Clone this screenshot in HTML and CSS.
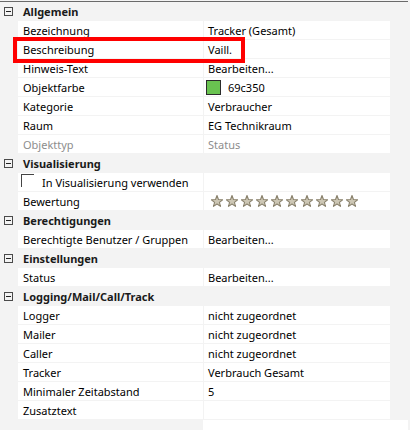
FILE: index.html
```html
<!DOCTYPE html>
<html lang="de">
<head>
<meta charset="utf-8">
<title>Eigenschaften</title>
<link rel="stylesheet" href="styles.css">
</head>
<body>
<div class="panel">
  <div class="cat"><svg class="toggle" width="9" height="9" viewBox="0 0 9 9"><rect x="0.5" y="0.5" width="8" height="8" fill="none" stroke="#4a4a4a"/><path d="M2 4.5H7" stroke="#222"/></svg><span>Allgemein</span></div>
  <div class="prop"><span class="name">Bezeichnung</span><span class="val">Tracker (Gesamt)</span></div>
  <div class="prop"><span class="name">Beschreibung</span><span class="val">Vaill.</span></div>
  <div class="prop"><span class="name">Hinweis-Text</span><span class="val">Bearbeiten...</span></div>
  <div class="prop"><span class="name">Objektfarbe</span><span class="val"><span class="swatch"></span>69c350</span></div>
  <div class="prop"><span class="name">Kategorie</span><span class="val">Verbraucher</span></div>
  <div class="prop"><span class="name">Raum</span><span class="val">EG Technikraum</span></div>
  <div class="prop disabled"><span class="name">Objekttyp</span><span class="val">Status</span></div>
  <div class="cat"><svg class="toggle" width="9" height="9" viewBox="0 0 9 9"><rect x="0.5" y="0.5" width="8" height="8" fill="none" stroke="#4a4a4a"/><path d="M2 4.5H7" stroke="#222"/></svg><span>Visualisierung</span></div>
  <div class="prop"><span class="name check"><span class="box"></span>In Visualisierung verwenden</span><span class="val"></span></div>
  <div class="prop"><span class="name">Bewertung</span><span class="val stars">
    <svg width="12" height="12" viewBox="0 0 11 11"><polygon points="5.5,0.5 6.85,4.14 10.73,4.3 7.69,6.71 8.73,10.45 5.5,8.3 2.27,10.45 3.31,6.71 0.27,4.3 4.15,4.14"/></svg>
    <svg width="12" height="12" viewBox="0 0 11 11"><polygon points="5.5,0.5 6.85,4.14 10.73,4.3 7.69,6.71 8.73,10.45 5.5,8.3 2.27,10.45 3.31,6.71 0.27,4.3 4.15,4.14"/></svg>
    <svg width="12" height="12" viewBox="0 0 11 11"><polygon points="5.5,0.5 6.85,4.14 10.73,4.3 7.69,6.71 8.73,10.45 5.5,8.3 2.27,10.45 3.31,6.71 0.27,4.3 4.15,4.14"/></svg>
    <svg width="12" height="12" viewBox="0 0 11 11"><polygon points="5.5,0.5 6.85,4.14 10.73,4.3 7.69,6.71 8.73,10.45 5.5,8.3 2.27,10.45 3.31,6.71 0.27,4.3 4.15,4.14"/></svg>
    <svg width="12" height="12" viewBox="0 0 11 11"><polygon points="5.5,0.5 6.85,4.14 10.73,4.3 7.69,6.71 8.73,10.45 5.5,8.3 2.27,10.45 3.31,6.71 0.27,4.3 4.15,4.14"/></svg>
    <svg width="12" height="12" viewBox="0 0 11 11"><polygon points="5.5,0.5 6.85,4.14 10.73,4.3 7.69,6.71 8.73,10.45 5.5,8.3 2.27,10.45 3.31,6.71 0.27,4.3 4.15,4.14"/></svg>
    <svg width="12" height="12" viewBox="0 0 11 11"><polygon points="5.5,0.5 6.85,4.14 10.73,4.3 7.69,6.71 8.73,10.45 5.5,8.3 2.27,10.45 3.31,6.71 0.27,4.3 4.15,4.14"/></svg>
    <svg width="12" height="12" viewBox="0 0 11 11"><polygon points="5.5,0.5 6.85,4.14 10.73,4.3 7.69,6.71 8.73,10.45 5.5,8.3 2.27,10.45 3.31,6.71 0.27,4.3 4.15,4.14"/></svg>
    <svg width="12" height="12" viewBox="0 0 11 11"><polygon points="5.5,0.5 6.85,4.14 10.73,4.3 7.69,6.71 8.73,10.45 5.5,8.3 2.27,10.45 3.31,6.71 0.27,4.3 4.15,4.14"/></svg>
    <svg width="12" height="12" viewBox="0 0 11 11"><polygon points="5.5,0.5 6.85,4.14 10.73,4.3 7.69,6.71 8.73,10.45 5.5,8.3 2.27,10.45 3.31,6.71 0.27,4.3 4.15,4.14"/></svg>
  </span></div>
  <div class="cat"><svg class="toggle" width="9" height="9" viewBox="0 0 9 9"><rect x="0.5" y="0.5" width="8" height="8" fill="none" stroke="#4a4a4a"/><path d="M2 4.5H7" stroke="#222"/></svg><span>Berechtigungen</span></div>
  <div class="prop"><span class="name">Berechtigte Benutzer / Gruppen</span><span class="val">Bearbeiten...</span></div>
  <div class="cat"><svg class="toggle" width="9" height="9" viewBox="0 0 9 9"><rect x="0.5" y="0.5" width="8" height="8" fill="none" stroke="#4a4a4a"/><path d="M2 4.5H7" stroke="#222"/></svg><span>Einstellungen</span></div>
  <div class="prop"><span class="name">Status</span><span class="val">Bearbeiten...</span></div>
  <div class="cat"><svg class="toggle" width="9" height="9" viewBox="0 0 9 9"><rect x="0.5" y="0.5" width="8" height="8" fill="none" stroke="#4a4a4a"/><path d="M2 4.5H7" stroke="#222"/></svg><span>Logging/Mail/Call/Track</span></div>
  <div class="prop"><span class="name">Logger</span><span class="val">nicht zugeordnet</span></div>
  <div class="prop"><span class="name">Mailer</span><span class="val">nicht zugeordnet</span></div>
  <div class="prop"><span class="name">Caller</span><span class="val">nicht zugeordnet</span></div>
  <div class="prop"><span class="name">Tracker</span><span class="val">Verbrauch Gesamt</span></div>
  <div class="prop"><span class="name">Minimaler Zeitabstand</span><span class="val">5</span></div>
  <div class="prop"><span class="name">Zusatztext</span><span class="val"></span></div>
  <div class="tail"></div>
  <div class="highlight"></div>
</div>
</body>
</html>
```
FILE: styles.css
```css
html, body {
  margin: 0;
  padding: 0;
  background: #f3f3f3;
}
body {
  padding-top: 1px;
  font-family: "Noto Sans", "Open Sans", sans-serif;
  font-size: 11px;
  color: #000;
  width: 410px;
  height: 429px;
  overflow: hidden;
}
.panel {
  position: relative;
  width: 408px;
  border-top: 1px solid #6a6a6a;
  display: flex;
  flex-direction: column;
  gap: 1px;
}
.cat {
  height: 18px;
  width: 390px;
  display: flex;
  align-items: center;
  font-weight: bold;
  color: #1a1a1a;
}
.toggle {
  margin-left: 4px;
  margin-right: 10px;
  flex: none;
}
.prop {
  height: 18px;
  width: 390px;
  display: grid;
  grid-template-columns: 185px 186px;
  column-gap: 1px;
  padding-left: 18px;
  box-sizing: border-box;
}
.name, .val {
  background: #fff;
  display: flex;
  align-items: center;
  white-space: nowrap;
  overflow: hidden;
}
.name {
  padding-left: 5px;
}
.val {
  padding-left: 4px;
}
.disabled .name, .disabled .val {
  color: #8d8d8d;
}
.swatch {
  width: 13px;
  height: 13px;
  background: #69c350;
  border: 1px solid #2b2b2b;
  margin-left: -2px;
  margin-right: 7px;
  flex: none;
}
.check {
  padding-left: 3px;
}
.box {
  width: 12px;
  height: 12px;
  border-top: 1px solid #444;
  border-left: 1px solid #444;
  margin-right: 8px;
  align-self: flex-start;
  margin-top: 1px;
  flex: none;
}
.stars {
  gap: 3px;
  padding-left: 7px;
}
.stars svg {
  flex: none;
}
.stars polygon {
  fill: #cdc7b5;
  stroke: #8b836e;
  stroke-width: 1;
  stroke-linejoin: round;
}
.tail {
  margin-left: 203px;
  width: 205px;
  height: 12px;
  background: #fff;
}
.highlight {
  position: absolute;
  left: 13px;
  top: 35px;
  width: 232px;
  height: 26px;
  border: 4px solid #ff0000;
  box-sizing: border-box;
}
```
